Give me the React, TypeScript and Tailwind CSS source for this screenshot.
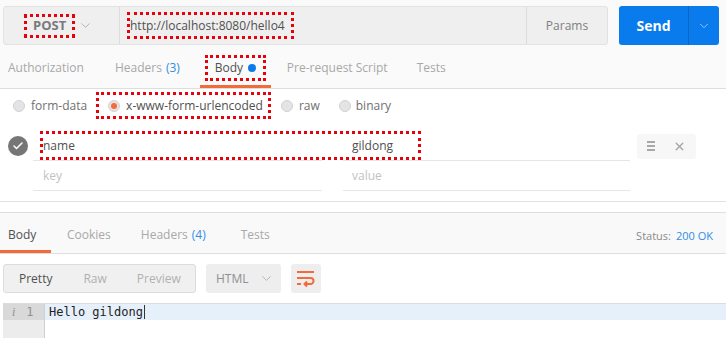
import { ChevronDown, Check, X } from "lucide-react";

const dotted = "border-[3px] border-dotted border-[#e8000b]";

function Radio({ on }: { on?: boolean }) {
  return (
    <span className="flex h-[12px] w-[12px] items-center justify-center rounded-full border border-[#d2d2d2] bg-[#e4e4e4]">
      {on && <span className="h-[6px] w-[6px] rounded-full bg-[#f26b3a]" />}
    </span>
  );
}

function WrapIcon() {
  return (
    <svg width="20" height="18" viewBox="0 0 20 18" fill="none" stroke="#f26b3a" strokeWidth="2">
      <path d="M1 2h17" />
      <path d="M1 8h13.5a3 3 0 0 1 0 6H9" />
      <path d="M11 11.5 8.5 14 11 16.5" />
      <path d="M1 14h4" />
    </svg>
  );
}

export default function App() {
  return (
    <div className="relative h-[338px] w-[726px] overflow-hidden bg-white font-['Open_Sans',sans-serif] text-[12px] text-[#505050]">
      {/* Request */}
      <div className="border-b border-[#e2e2e2] pb-[10px]">
        <div className="bg-[#fafafa]">
          <div className="flex pl-[3px] pt-[6px]">
            <div className="flex h-[39px] w-[605px] rounded-[3px] border border-[#e2e2e2] bg-[#efefef]">
              <div className="flex w-[116px] items-center border-r border-[#dcdcdc] pl-[20px]">
                <span className={`flex h-[24px] items-center px-[6px] ${dotted}`}>
                  <span className="text-[13px] font-bold text-[#7a7a7a]">POST</span>
                </span>
                <ChevronDown size={15} strokeWidth={1.5} className="ml-[3px] text-[#b0b0b0]" />
              </div>
              <div className="flex flex-1 items-center pl-[7px]">
                <span className={`flex h-[27px] items-center pr-[6px] text-[12px] text-[#505050] ${dotted}`}>
                  http://localhost:8080/hello4
                </span>
              </div>
              <div className="flex w-[81px] items-center justify-center border-l border-[#dcdcdc] text-[12px] text-[#808080]">
                Params
              </div>
            </div>
            <div className="ml-[11px] flex h-[39px] w-[100px] rounded-[3px] bg-[#097bed] text-white">
              <div className="flex w-[69px] items-center justify-center text-[14px] font-bold">Send</div>
              <div className="flex flex-1 items-center justify-center border-l border-[#0a66c4]">
                <ChevronDown size={14} strokeWidth={1.5} className="text-[#a8cff7]" />
              </div>
            </div>
          </div>

          <div className="flex h-[44px] border-b border-[#dedede] pl-[8px] text-[12px] text-[#a8a8a8]">
            <div className="flex h-full items-center border-b-[3px] border-transparent pt-[6px]">Authorization</div>
            <div className="ml-[31px] flex h-full items-center border-b-[3px] border-transparent pt-[6px]">
              Headers<span className="ml-[4px] text-[#2f8de4]">(3)</span>
            </div>
            <div className="ml-[20px] flex h-full w-[71px] items-center justify-center border-b-[3px] border-[#f26b3a] pt-[6px]">
              <span className={`flex h-[26px] items-center gap-[5px] px-[7px] text-[#505050] ${dotted}`}>
                Body<span className="h-[8px] w-[8px] rounded-full bg-[#097bed]" />
              </span>
            </div>
            <div className="ml-[16px] flex h-full items-center border-b-[3px] border-transparent pt-[6px]">Pre-request Script</div>
            <div className="ml-[29px] flex h-full items-center border-b-[3px] border-transparent pt-[6px]">Tests</div>
          </div>
        </div>

        <div className="flex h-[30px] items-center pl-[13px] pt-[3px] text-[12px] text-[#707070]">
          <Radio />
          <span className="ml-[6px]">form-data</span>
          <span className={`ml-[9px] flex h-[27px] items-center pl-[9px] pr-[5px] ${dotted}`}>
            <Radio on />
            <span className="ml-[6px] text-[#505050]">x-www-form-urlencoded</span>
          </span>
          <span className="ml-[10px]"><Radio /></span>
          <span className="ml-[6px]">raw</span>
          <span className="ml-[19px]"><Radio /></span>
          <span className="ml-[5px]">binary</span>
        </div>

        <div className="relative mt-[12px] flex h-[30px] items-center pl-[8px] text-[12px]">
          <span className="flex h-[20px] w-[20px] items-center justify-center rounded-full bg-[#767676]">
            <Check size={12} strokeWidth={3} className="text-white" />
          </span>
          <div className="ml-[5px] flex h-full w-[289px] items-center border-b border-[#e6e6e6] pl-[10px]">name</div>
          <div className="ml-[21px] flex h-full w-[287px] items-center border-b border-[#e6e6e6] pl-[9px]">gildong</div>
          <div className="ml-[7px] flex h-[25px] w-[59px] items-center justify-center gap-[18px] rounded-[3px] bg-[#f7f7f7] text-[#a8a8a8]">
            <span className="flex flex-col gap-[2px]">
              <span className="h-[2px] w-[8px] bg-[#a8a8a8]" />
              <span className="h-[2px] w-[8px] bg-[#a8a8a8]" />
              <span className="h-[2px] w-[8px] bg-[#a8a8a8]" />
            </span>
            <X size={13} strokeWidth={2.5} />
          </div>
          <div className={`absolute left-[40px] top-0 h-[29px] w-[381px] ${dotted}`} />
        </div>
        <div className="flex h-[30px] items-center pl-[33px] text-[12px] text-[#c2c2c2]">
          <div className="flex h-full w-[289px] items-center border-b border-[#e6e6e6] pl-[10px]">key</div>
          <div className="ml-[21px] flex h-full w-[287px] items-center border-b border-[#e6e6e6] pl-[9px]">value</div>
        </div>
      </div>

      {/* Response */}
      <div className="mt-[10px] flex h-[42px] items-stretch border-y border-[#dedede] bg-[#f9f9f9] text-[12px] text-[#a8a8a8]">
        <div className="flex w-[51px] items-center border-b-[3px] border-[#f26b3a] pl-[8px] pt-[6px] text-[#505050]">Body</div>
        <div className="ml-[16px] flex items-center border-b-[3px] border-transparent pt-[6px]">Cookies</div>
        <div className="ml-[30px] flex items-center border-b-[3px] border-transparent pt-[6px]">
          Headers<span className="ml-[4px] text-[#2f8de4]">(4)</span>
        </div>
        <div className="ml-[35px] flex items-center border-b-[3px] border-transparent pt-[6px]">Tests</div>
        <div className="ml-auto flex items-center pr-[13px] pt-[6px] text-[11px]">
          <span className="text-[#8a8a8a]">Status:</span>
          <span className="ml-[5px] text-[#2f8de4]">200 OK</span>
        </div>
      </div>

      <div className="mt-[10px] flex pl-[3px] text-[12px]">
        <div className="flex h-[29px] w-[193px] items-center rounded-[3px] border border-[#dcdcdc] bg-[#f0f0f0] pl-[15px] text-[#b0b0b0]">
          <span className="text-[#505050]">Pretty</span>
          <span className="ml-[31px]">Raw</span>
          <span className="ml-[30px]">Preview</span>
        </div>
        <div className="ml-[10px] flex h-[29px] w-[75px] items-center rounded-[3px] bg-[#eeeeee] pl-[10px] text-[#909090]">
          HTML
          <ChevronDown size={15} strokeWidth={1.5} className="ml-[10px] text-[#b0b0b0]" />
        </div>
        <div className="ml-[10px] flex h-[29px] w-[30px] items-center justify-center rounded-[3px] bg-[#eeeeee]">
          <WrapIcon />
        </div>
      </div>

      <div className="ml-[3px] mt-[10px] flex h-full border-t border-[#dcdcdc] font-['DejaVu_Sans_Mono',monospace] text-[12px]">
        <div className="w-[42px] border-r border-[#d0d0d0] bg-[#ececec]">
          <div className="flex h-[16px] items-center bg-[#d9d9d9] pl-[9px] text-[#909090]">
            <span className="font-['Liberation_Serif',serif] italic">i</span>
            <span className="ml-[11px]">1</span>
          </div>
        </div>
        <div className="flex-1">
          <div className="flex h-[16px] items-center bg-[#e6f0fb] pl-[4px] text-[#222]">
            Hello gildong<span className="ml-[1px] h-[14px] w-px bg-[#333]" />
          </div>
        </div>
      </div>
    </div>
  );
}
